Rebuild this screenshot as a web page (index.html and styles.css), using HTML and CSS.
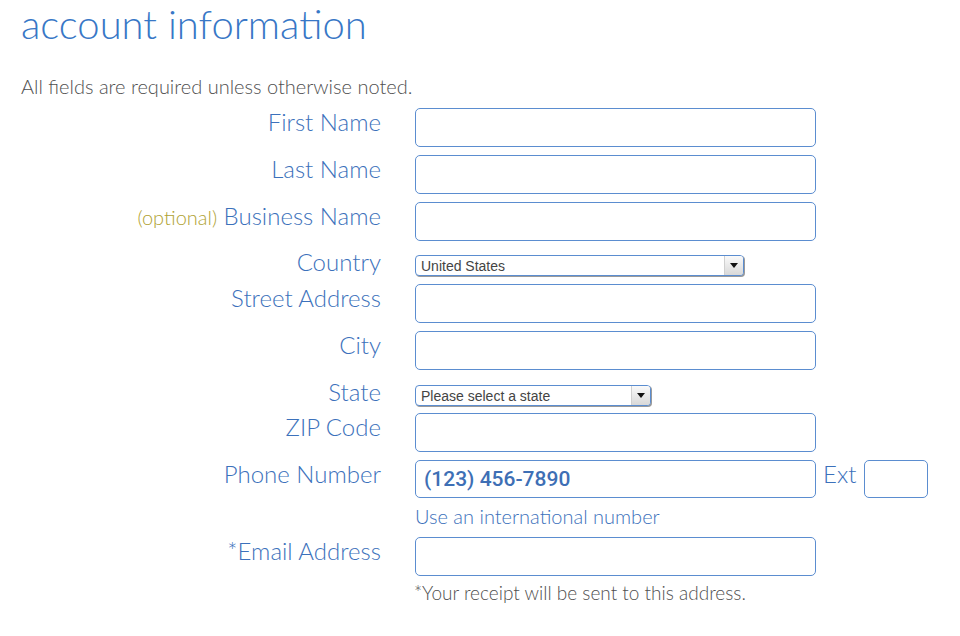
FILE: index.html
```html
<!DOCTYPE html>
<html lang="en">
<head>
<meta charset="utf-8">
<title>Account information</title>
<link rel="stylesheet" href="styles.css">
</head>
<body>
<div class="page">
  <h1 class="title">account information</h1>
  <p class="intro">All fields are required unless otherwise noted.</p>
  <form class="form">
    <div class="row">
      <label class="label">First Name</label>
      <input class="field" type="text">
    </div>
    <div class="row">
      <label class="label">Last Name</label>
      <input class="field" type="text">
    </div>
    <div class="row row-tight">
      <label class="label"><span class="optional">(optional)</span> Business Name</label>
      <input class="field" type="text">
    </div>
    <div class="row row-select">
      <label class="label">Country</label>
      <div class="select select-country"><span>United States</span><span class="arrow"></span></div>
    </div>
    <div class="row">
      <label class="label">Street Address</label>
      <input class="field" type="text">
    </div>
    <div class="row">
      <label class="label">City</label>
      <input class="field" type="text">
    </div>
    <div class="row row-select row-state">
      <label class="label">State</label>
      <div class="select select-state"><span>Please select a state</span><span class="arrow"></span></div>
    </div>
    <div class="row">
      <label class="label">ZIP Code</label>
      <input class="field" type="text">
    </div>
    <div class="row row-phone">
      <label class="label">Phone Number</label>
      <input class="field phone" type="text" value="(123) 456-7890">
      <span class="ext-label">Ext</span>
      <input class="field ext" type="text">
    </div>
    <p class="help">Use an international number</p>
    <div class="row row-email">
      <label class="label">*Email Address</label>
      <input class="field" type="text">
    </div>
    <p class="note">*Your receipt will be sent to this address.</p>
  </form>
</div>
</body>
</html>
```
FILE: styles.css
```css
html, body {
  margin: 0;
  padding: 0;
  background: #ffffff;
}

.page {
  padding-left: 21px;
  font-family: Lato, "Open Sans", sans-serif;
  font-weight: 300;
}

.title {
  margin: 0;
  font-size: 40px;
  line-height: 48px;
  font-weight: 300;
  color: #3877c6;
}

.intro {
  margin: 26px 0 0;
  font-size: 20px;
  line-height: 24px;
  color: #505050;
}

.form {
  margin-top: 10px;
}

.row {
  display: flex;
  align-items: flex-start;
  margin-bottom: 8px;
}

.label {
  width: 360px;
  margin-right: 34px;
  text-align: right;
  font-size: 24px;
  line-height: 28px;
  color: #3c71bb;
}

.optional {
  font-size: 20px;
  color: #b0a232;
}

.field {
  box-sizing: border-box;
  width: 401px;
  height: 39px;
  margin: 0;
  border: 1.5px solid #5b8dd0;
  border-radius: 5px;
  background: #fff;
  outline: none;
  padding: 0 8px;
}

.row-select {
  height: 28px;
}

.row-state {
  height: 27px;
}

.row-tight {
  margin-bottom: 7px;
}

.select {
  box-sizing: border-box;
  display: flex;
  align-items: center;
  justify-content: space-between;
  height: 21px;
  margin-top: 7px;
  border: 1.5px solid #5b8dd0;
  border-radius: 4px;
  background: #fff;
  font-family: "Liberation Sans", Arial, sans-serif;
  font-weight: 400;
  font-size: 14px;
  color: #444;
  padding-left: 5px;
  box-shadow: 1px 1px 0 #9a9a9a;
}

.select-country {
  width: 329px;
}

.select-state {
  width: 236px;
}

.arrow {
  position: relative;
  width: 18px;
  height: 100%;
  background: linear-gradient(#fafafa, #d8d8d8);
  border-left: 1px solid #d0d0d0;
  border-radius: 0 3px 3px 0;
}

.arrow::after {
  content: "";
  position: absolute;
  left: 5px;
  top: 7px;
  border-left: 4px solid transparent;
  border-right: 4px solid transparent;
  border-top: 5px solid #111;
}

.row-phone {
  align-items: flex-start;
  margin-bottom: 0;
}

.phone {
  height: 38px;
  font-family: Roboto, "Liberation Sans", sans-serif;
  font-weight: 500;
  font-size: 21px;
  color: #3e6fb5;
}

.ext-label {
  margin-left: 7px;
  font-size: 24px;
  line-height: 28px;
  color: #3c71bb;
}

.ext {
  width: 64px;
  height: 38px;
  margin-left: 8px;
}

.help {
  margin: 6px 0 9px 394px;
  font-size: 20px;
  line-height: 24px;
  color: #3c71bb;
}

.row-email {
  margin-bottom: 5px;
}

.note {
  margin: 0 0 0 393px;
  font-size: 19px;
  line-height: 24px;
  color: #505050;
}
```
